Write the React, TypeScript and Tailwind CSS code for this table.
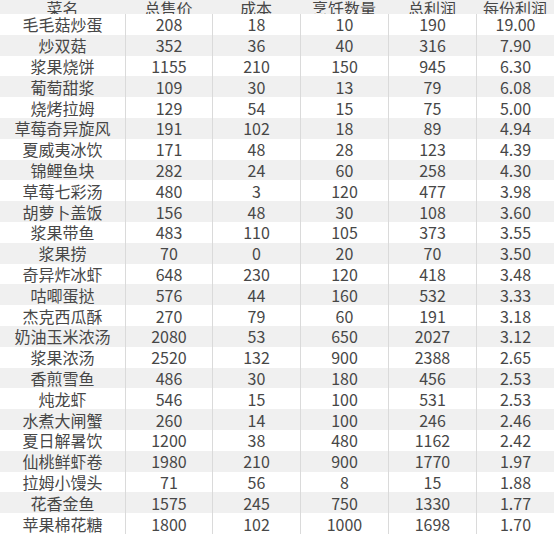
import React from "react";

const headers = ["菜名", "总售价", "成本", "烹饪数量", "总利润", "每份利润"];

const rows: [string, number, number, number, number, string][] = [
  ["毛毛菇炒蛋", 208, 18, 10, 190, "19.00"],
  ["炒双菇", 352, 36, 40, 316, "7.90"],
  ["浆果烧饼", 1155, 210, 150, 945, "6.30"],
  ["葡萄甜浆", 109, 30, 13, 79, "6.08"],
  ["烧烤拉姆", 129, 54, 15, 75, "5.00"],
  ["草莓奇异旋风", 191, 102, 18, 89, "4.94"],
  ["夏威夷冰饮", 171, 48, 28, 123, "4.39"],
  ["锦鲤鱼块", 282, 24, 60, 258, "4.30"],
  ["草莓七彩汤", 480, 3, 120, 477, "3.98"],
  ["胡萝卜盖饭", 156, 48, 30, 108, "3.60"],
  ["浆果带鱼", 483, 110, 105, 373, "3.55"],
  ["浆果捞", 70, 0, 20, 70, "3.50"],
  ["奇异炸冰虾", 648, 230, 120, 418, "3.48"],
  ["咕唧蛋挞", 576, 44, 160, 532, "3.33"],
  ["杰克西瓜酥", 270, 79, 60, 191, "3.18"],
  ["奶油玉米浓汤", 2080, 53, 650, 2027, "3.12"],
  ["浆果浓汤", 2520, 132, 900, 2388, "2.65"],
  ["香煎雪鱼", 486, 30, 180, 456, "2.53"],
  ["炖龙虾", 546, 15, 100, 531, "2.53"],
  ["水煮大闸蟹", 260, 14, 100, 246, "2.46"],
  ["夏日解暑饮", 1200, 38, 480, 1162, "2.42"],
  ["仙桃鲜虾卷", 1980, 210, 900, 1770, "1.97"],
  ["拉姆小馒头", 71, 56, 8, 15, "1.88"],
  ["花香金鱼", 1575, 245, 750, 1330, "1.77"],
  ["苹果棉花糖", 1800, 102, 1000, 1698, "1.70"],
];

const grid = "grid grid-cols-[125px_87px_88px_88px_88px_78px]";

const App: React.FC = () => {
  return (
    <div
      className="w-[554px] h-[539px] overflow-hidden bg-white text-[#474747] text-[16px]"
      style={{ fontFamily: '"Noto Sans CJK SC", "Noto Sans", sans-serif' }}
    >
      {/* header row, cropped at the top like the screenshot */}
      <div className={`${grid} h-[14px] overflow-hidden bg-[#f0f0f0]`}>
        {headers.map((h) => (
          <div key={h} className="flex items-end justify-center leading-none">
            {h}
          </div>
        ))}
      </div>
      {rows.map((r, i) => (
        <div
          key={r[0]}
          className={`${grid} h-[20.8px] ${i % 2 === 0 ? "bg-white" : "bg-[#f0f0f0]"}`}
        >
          {r.map((c, j) => (
            <div
              key={j}
              className={`flex items-center justify-center leading-none ${
                j > 0 ? "border-l border-[#dadada]" : ""
              }`}
            >
              {c}
            </div>
          ))}
        </div>
      ))}
    </div>
  );
};

export default App;
